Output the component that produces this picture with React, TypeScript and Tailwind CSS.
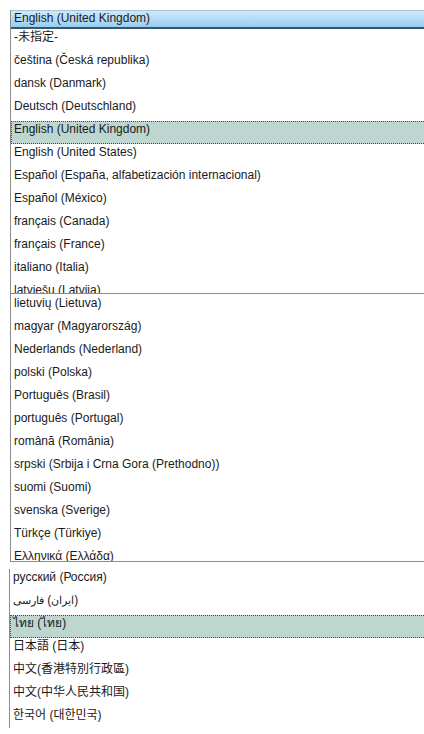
import React from "react";

type Row = { label: React.ReactNode; selected?: boolean; font?: string };

const cjk = "font-['Liberation_Sans','Noto_Sans_CJK_SC',sans-serif]";
const jp = "font-['Liberation_Sans','Noto_Sans_CJK_JP',sans-serif]";
const tc = "font-['Liberation_Sans','Noto_Sans_CJK_TC',sans-serif]";
const kr = "font-['Liberation_Sans','Noto_Sans_CJK_KR',sans-serif]";

// first page of the list
const pageOne: Row[] = [
  { label: "-未指定-", font: jp },
  { label: "čeština (Česká republika)" },
  { label: "dansk (Danmark)" },
  { label: "Deutsch (Deutschland)" },
  { label: "English (United Kingdom)", selected: true },
  { label: "English (United States)" },
  { label: "Español (España, alfabetización internacional)" },
  { label: "Español (México)" },
  { label: "français (Canada)" },
  { label: "français (France)" },
  { label: "italiano (Italia)" },
  { label: "latviešu (Latvija)" },
];

const pageTwo: Row[] = [
  { label: "lietuvių (Lietuva)" },
  { label: "magyar (Magyarország)" },
  { label: "Nederlands (Nederland)" },
  { label: "polski (Polska)" },
  { label: "Português (Brasil)" },
  { label: "português (Portugal)" },
  { label: "română (România)" },
  { label: "srpski (Srbija i Crna Gora (Prethodno))" },
  { label: "suomi (Suomi)" },
  { label: "svenska (Sverige)" },
  { label: "Türkçe (Türkiye)" },
  { label: "Ελληνικά (Ελλάδα)" },
];

const pageThree: Row[] = [
  { label: "русский (Россия)" },
  {
    // each word kept in its own box so the words sit left to right as in the shot
    label: (
      <span className="inline-flex items-baseline">
        <span className="inline-block text-[11px]" dir="rtl">
          فارسی
        </span>
        <span className="inline-block">&nbsp;(</span>
        <span className="inline-block text-[11px]" dir="rtl">
          ایران
        </span>
        <span className="inline-block">)</span>
      </span>
    ),
  },
  { label: "ไทย (ไทย)", selected: true },
  { label: "日本語 (日本)", font: jp },
  { label: "中文(香港特別行政區)", font: tc },
  { label: "中文(中华人民共和国)", font: cjk },
  { label: "한국어 (대한민국)", font: kr },
];

const ListRow = ({ row }: { row: Row }) => (
  <div
    className={
      row.selected
        ? "h-[23px] shrink-0 pl-[2px] leading-[14px] whitespace-nowrap bg-[#bdd6d0] border-y border-l border-dotted border-[#4a4a4a]"
        : "h-[23px] shrink-0 pl-[3px] pt-[1px] leading-[14px] whitespace-nowrap"
    }
  >
    <span className={row.font}>{row.label}</span>
  </div>
);

const App: React.FC = () => {
  return (
    <div className="w-[424px] h-[734px] bg-white pt-[10px] overflow-hidden font-['Liberation_Sans',sans-serif] text-[12px] text-[#1a1a1a]">
      {/* Page 1 with the closed box on top */}
      <div className="ml-[10px] h-[284px] flex flex-col overflow-hidden border-l border-b border-[#8c8c8c]">
        <div className="h-[19px] shrink-0 flex flex-col border-t border-[#a7c3d4] border-l border-l-[#5b7f94] -ml-px">
          <div className="h-[16px] pl-[3px] leading-[15px] bg-linear-to-b from-[#cde8fb] via-[#b4dcf6] to-[#98cdef] whitespace-nowrap">
            English (United Kingdom)
          </div>
          <div className="h-[2px] bg-[#3b5667]" />
        </div>
        {pageOne.map((row, i) => (
          <ListRow key={i} row={row} />
        ))}
      </div>

      {/* Page 2 */}
      <div className="ml-[10px] h-[268px] pt-[1px] flex flex-col overflow-hidden border-l border-b border-[#8c8c8c]">
        {pageTwo.map((row, i) => (
          <ListRow key={i} row={row} />
        ))}
      </div>

      {/* Page 3 */}
      <div className="ml-[9px] mt-[7px] h-[159px] flex flex-col overflow-hidden border-l border-[#8c8c8c]">
        {pageThree.map((row, i) => (
          <ListRow key={i} row={row} />
        ))}
      </div>
    </div>
  );
};

export default App;
